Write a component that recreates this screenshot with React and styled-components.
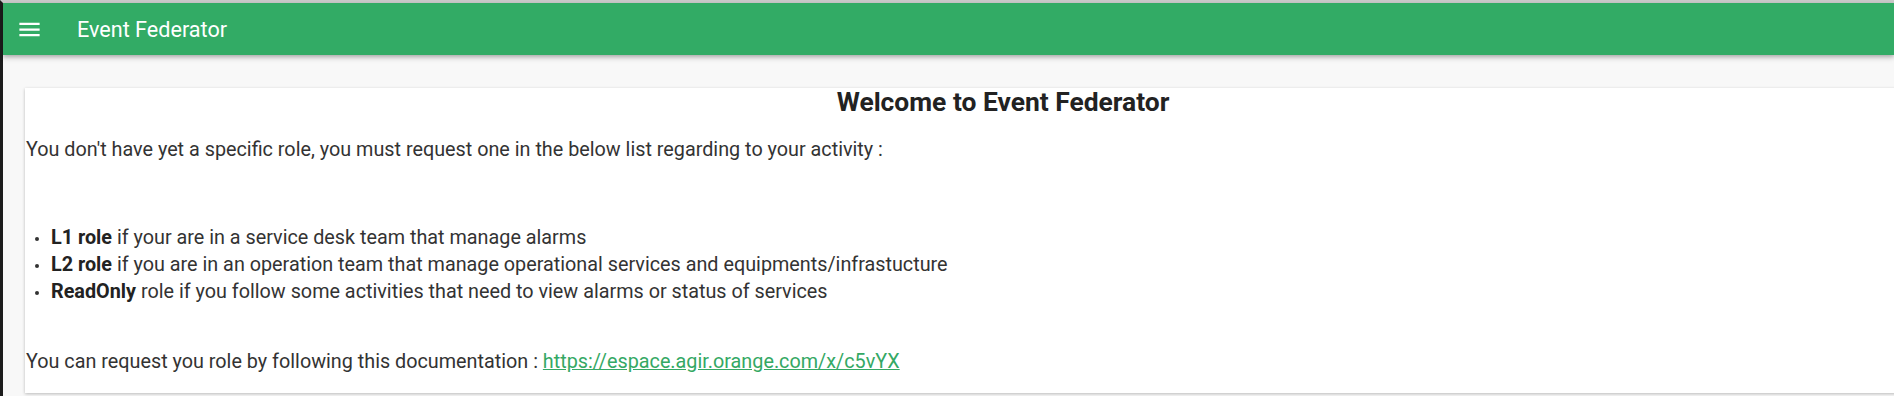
import React from "react";
import styled, { createGlobalStyle } from "styled-components";

const Global = createGlobalStyle`
  html, body { margin: 0; padding: 0; overflow: hidden; }
  body {
    font-family: Roboto, "Liberation Sans", Arial, sans-serif;
    background: #f8f8f8;
    color: #333;
  }
`;

const Frame = styled.div`
  min-height: 396px;
  box-sizing: border-box;
  border-top: 3px solid #c9c9c9;
  border-left: 3px solid #1c1c1c;
  background: #f8f8f8;
`;

const TopBar = styled.header`
  height: 52px;
  background: #32ab65;
  display: flex;
  align-items: center;
  padding-left: 13px;
  box-shadow: 0 2px 4px rgba(0, 0, 0, 0.25), 0 4px 6px rgba(0, 0, 0, 0.08);
  position: relative;
  z-index: 1;
`;

const MenuButton = styled.button`
  width: 27px;
  height: 27px;
  padding: 0;
  border: 0;
  background: none;
  color: #fff;
  display: flex;
  align-items: center;
  justify-content: center;
  cursor: pointer;
`;

const AppTitle = styled.div`
  margin-left: 34px;
  color: #fff;
  font-size: 21.6px;
  font-weight: 400;
`;

const Main = styled.main`
  padding: 33px 0 0 22px;
`;

const Card = styled.section`
  width: 1956px;
  background: #fff;
  box-shadow: 0 1px 3px rgba(0, 0, 0, 0.25);
  padding: 0 0 18px 0;
  font-size: 19.8px;
  line-height: 27px;
`;

const Heading = styled.h2`
  margin: 0 0 20px;
  text-align: center;
  font-size: 26.4px;
  line-height: 28px;
  font-weight: 700;
  color: #222;
`;

const Paragraph = styled.p`
  margin: 0 0 ${(p) => p.$gap || 0}px;
  padding-left: 1px;
`;

const RoleList = styled.ul`
  margin: 0 0 43px;
  padding-left: 26px;
  list-style: none;
`;

const RoleItem = styled.li`
  position: relative;
  &::before {
    content: "";
    position: absolute;
    left: -16px;
    top: 13px;
    width: 4px;
    height: 4px;
    border-radius: 50%;
    background: #333;
  }
  b {
    font-weight: 700;
    color: #222;
  }
`;

const DocLink = styled.a`
  color: #34a864;
  text-decoration: underline;
`;

function MenuIcon() {
  return (
    <svg width="27" height="27" viewBox="0 0 24 24" fill="currentColor">
      <path d="M3 18h18v-2H3v2zm0-5h18v-2H3v2zm0-7v2h18V6H3z" />
    </svg>
  );
}

export default function App() {
  return (
    <>
      <Global />
      <Frame>
        <TopBar>
          <MenuButton aria-label="menu">
            <MenuIcon />
          </MenuButton>
          <AppTitle>Event Federator</AppTitle>
        </TopBar>
        <Main>
          <Card>
            <Heading>Welcome to Event Federator</Heading>
            <Paragraph $gap={61}>
              You don't have yet a specific role, you must request one in the below list regarding to your activity :
            </Paragraph>
            <RoleList>
              <RoleItem>
                <b>L1 role</b> if your are in a service desk team that manage alarms
              </RoleItem>
              <RoleItem>
                <b>L2 role</b> if you are in an operation team that manage operational services and equipments/infrastucture
              </RoleItem>
              <RoleItem>
                <b>ReadOnly</b> role if you follow some activities that need to view alarms or status of services
              </RoleItem>
            </RoleList>
            <Paragraph>
              You can request you role by following this documentation :{" "}
              <DocLink href="#">https://espace.agir.orange.com/x/c5vYX</DocLink>
            </Paragraph>
          </Card>
        </Main>
      </Frame>
    </>
  );
}
